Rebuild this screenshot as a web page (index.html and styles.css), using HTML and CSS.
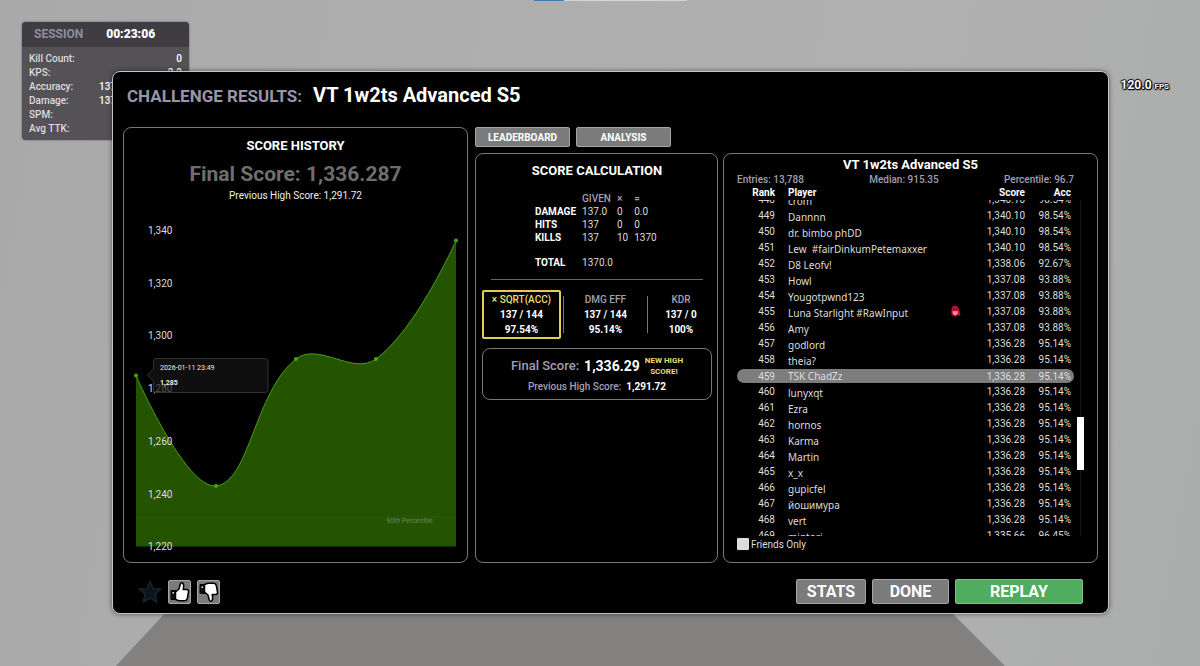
FILE: index.html
```
<!DOCTYPE html>
<html lang="en">
<head>
<meta charset="UTF-8">
<title>Challenge Results</title>
<link rel="stylesheet" href="styles.css">
</head>
<body>
<div class="floor"></div>
<div class="top-bar"></div>
<div class="fps">120.0 <small>FPS</small></div>

<section class="session">
    <header class="session-head"><span>SESSION</span><b>00:23:06</b></header>
    <dl class="session-stats">
        <div><dt>Kill Count:</dt><dd>0</dd></div>
        <div><dt>KPS:</dt><dd>2.2</dd></div>
        <div><dt>Accuracy:</dt><dd class="long">137</dd></div>
        <div><dt>Damage:</dt><dd class="long">137</dd></div>
        <div><dt>SPM:</dt></div>
        <div><dt>Avg TTK:</dt></div>
    </dl>
</section>

<main class="results">
    <h1 class="results-title"><span>CHALLENGE RESULTS:</span> VT 1w2ts Advanced S5</h1>

    <div class="columns">
        <section class="panel history">
            <h2>SCORE HISTORY</h2>
            <p class="history-final">Final Score: 1,336.287</p>
            <p class="history-prev">Previous High Score: 1,291.72</p>
            <svg class="chart" viewBox="124 206 343 350">
                <path class="area" d="M136 375.5C136 375.5 185.5 489 216 486C249.5 482.5 254.3 392 296 359C318.3 341.3 353 376 376 359C417 328.6 456 240.5 456 240.5V546.5H136Z"/>
                <path class="limit" d="M136 517H456"/>
                <path class="line" d="M136 375.5C136 375.5 185.5 489 216 486C249.5 482.5 254.3 392 296 359C318.3 341.3 353 376 376 359C417 328.6 456 240.5 456 240.5"/>
                <g class="dots">
                    <circle cx="136" cy="375.5" r="2"/>
                    <circle cx="216" cy="486" r="2"/>
                    <circle cx="296" cy="359" r="2"/>
                    <circle cx="376" cy="359" r="2"/>
                    <circle cx="456" cy="240.5" r="2"/>
                </g>
                <g class="ticks">
                    <text x="148" y="234">1,340</text>
                    <text x="148" y="287">1,320</text>
                    <text x="148" y="339">1,300</text>
                    <text x="148" y="392">1,280</text>
                    <text x="148" y="445">1,260</text>
                    <text x="148" y="498">1,240</text>
                    <text x="148" y="550">1,220</text>
                </g>
                <text class="limit-label" x="386" y="523">90th Percentile</text>
                <path class="tip" d="M156 358.5H265Q268 358.5 268 361.5V389.5Q268 392.5 265 392.5H156Q153.500 392.5 153.500 389.5V381L147.500 375L153.500 369V361.5Q153.500 358.5 156 358.5Z"/>
                <g class="tip-text">
                    <text x="160" y="370">2026-01-11 23:49</text>
                    <text class="strong" x="160" y="385">1,285</text>
                </g>
            </svg>
        </section>

        <div class="right">
            <nav class="tabs">
                <button type="button" class="btn">LEADERBOARD</button>
                <button type="button" class="btn">ANALYSIS</button>
            </nav>
            <div class="right-panels">
                <section class="panel calc">
                    <h2>SCORE CALCULATION</h2>
                    <table class="calc-table">
                        <thead>
                            <tr><td></td><th>GIVEN</th><th>×</th><th>=</th></tr>
                        </thead>
                        <tbody>
                            <tr><th>DAMAGE</th><td>137.0</td><td>0</td><td>0.0</td></tr>
                            <tr><th>HITS</th><td>137</td><td>0</td><td>0</td></tr>
                            <tr><th>KILLS</th><td>137</td><td>10</td><td>1370</td></tr>
                        </tbody>
                        <tfoot>
                            <tr><th>TOTAL</th><td colspan="3">1370.0</td></tr>
                        </tfoot>
                    </table>
                    <hr>
                    <div class="metrics">
                        <div class="metric active"><span>× SQRT(ACC)</span><b>137 / 144</b><b>97.54%</b></div>
                        <div class="bar"></div>
                        <div class="metric"><span>DMG EFF</span><b>137 / 144</b><b>95.14%</b></div>
                        <div class="bar"></div>
                        <div class="metric last"><span>KDR</span><b>137 / 0</b><b>100%</b></div>
                    </div>
                    <div class="final">
                        <div class="final-row">
                            <span>Final Score:</span><b>1,336.29</b><em>NEW HIGH<br>SCORE!</em>
                        </div>
                        <div class="prev-row"><span>Previous High Score:</span><b>1,291.72</b></div>
                    </div>
                </section>

                <section class="panel board">
                    <h2>VT 1w2ts Advanced S5</h2>
                    <div class="board-meta"><span>Entries: 13,788</span><span>Median: 915.35</span><span>Percentile: 96.7</span></div>
                    <div class="board-body">
                        <table class="board-table">
                            <thead>
                                <tr><th>Rank</th><th class="name">Player</th><th>Score</th><th>Acc</th></tr>
                            </thead>
                            <tbody id="rows"></tbody>
                        </table>
                        <div class="scroll"><div class="thumb"></div></div>
                    </div>
                    <label class="friends"><input type="checkbox">Friends Only</label>
                </section>
            </div>
        </div>
    </div>

    <footer class="actions">
        <button type="button" class="star" aria-label="Favorite">
            <svg viewBox="0 0 22 22"><path d="M11 1.500L13.800 8L20.500 8.500L15.500 13L17 20L11 16.500L5 20L6.500 13L1.500 8.500L8.200 8Z"/></svg>
        </button>
        <button type="button" class="btn vote" aria-label="Like">
            <svg viewBox="1 1 21 22"><path class="cuff" d="M3 10.500H8V19.500H3Z"/><path class="hand" d="M7.500 12L11 9L12.300 4Q13 2.300 14.500 3Q16.200 4 15.500 7.500L15.200 9.500H19Q21 10 20.500 12L19.300 18.500Q18.800 20.500 16.800 20.700H11L7.500 19.500Z"/><path class="button" d="M4.500 12h1.400v1.400H4.500Z"/></svg>
        </button>
        <button type="button" class="btn vote" aria-label="Dislike">
            <svg viewBox="1 1 21 22"><path class="cuff" d="M3 4.500H8V13.500H3Z"/><path class="hand" d="M7.500 4.500L11 3.300H16.800Q18.800 3.500 19.300 5.500L20.500 12Q21 14 19 14.500H15.200L15.500 16.500Q16.200 20 14.500 21Q13 21.700 12.300 20L11 15L7.500 12Z"/><path class="button" d="M4.500 6.500h1.400v1.400H4.500Z"/></svg>
        </button>
        <span class="grow"></span>
        <button type="button" class="btn big stats">STATS</button>
        <button type="button" class="btn big done">DONE</button>
        <button type="button" class="btn big replay">REPLAY</button>
    </footer>
</main>

<script>
const players = [
    [448, 'crom', '1,340.10', '98.54%'],
    [449, 'Dannnn', '1,340.10', '98.54%'],
    [450, 'dr. bimbo phDD', '1,340.10', '98.54%'],
    [451, 'Lew  #fairDinkumPetemaxxer', '1,340.10', '98.54%'],
    [452, 'D8 Leofv!', '1,338.06', '92.67%'],
    [453, 'Howl', '1,337.08', '93.88%'],
    [454, 'Yougotpwnd123', '1,337.08', '93.88%'],
    [455, 'Luna Starlight #RawInput', '1,337.08', '93.88%'],
    [456, 'Amy', '1,337.08', '93.88%'],
    [457, 'godlord', '1,336.28', '95.14%'],
    [458, 'theia?', '1,336.28', '95.14%'],
    [459, 'TSK ChadZz', '1,336.28', '95.14%'],
    [460, 'lunyxqt', '1,336.28', '95.14%'],
    [461, 'Ezra', '1,336.28', '95.14%'],
    [462, 'hornos', '1,336.28', '95.14%'],
    [463, 'Karma', '1,336.28', '95.14%'],
    [464, 'Martin', '1,336.28', '95.14%'],
    [465, 'x_x', '1,336.28', '95.14%'],
    [466, 'gupicfel', '1,336.28', '95.14%'],
    [467, 'йошимура', '1,336.28', '95.14%'],
    [468, 'vert', '1,336.28', '95.14%'],
    [469, 'mintori', '1,335.66', '96.45%']
];
const myRank = 459;
const badgeRank = 455;
const badge = '<svg class="badge" viewBox="0 0 12 12"><path fill="#c8102e" d="M2.500 10.500V4Q3 .8 6 .8T10 4L11.500 10.500H8L6 11.500L4 10.500Z"/><path fill="#ff8fb0" d="M3.500 6.200H9L8.500 8.800L6.200 10.500L4 8.800Z"/><path fill="#5c0614" d="M4 3.500h1.500v1H4ZM7 3.200h1.500v1H7Z"/></svg>';

document.getElementById('rows').innerHTML = players.map(([rank, name, score, acc]) =>
    `<tr${rank === myRank ? ' class="me"' : ''}><td>${rank}</td><td class="name">${name}${rank === badgeRank ? badge : ''}</td><td>${score}</td><td>${acc}</td></tr>`
).join('');
</script>
</body>
</html>
```
FILE: styles.css
```
* {
    box-sizing: border-box;
}
body {
    margin: 0;
    min-height: 100vh;
    padding: 71px 91px 52px 112px;
    position: relative;
    overflow: hidden;
    background: linear-gradient(100deg, #a8a9a8 0%, #aeaeae 35%, #b0b0b0 70%, #abadac 100%);
    font-family: Roboto, "Liberation Sans", sans-serif;
    font-size: 10px;
    color: #fff;
}
h1, h2, p, dl, dd {
    margin: 0;
}
button {
    font-family: inherit;
    padding: 0;
    cursor: pointer;
}

/* game view behind the window */
.floor {
    position: absolute;
    left: 116px;
    right: 195px;
    bottom: 0;
    height: 54px;
    background: #82817f;
    clip-path: polygon(50px 0, calc(100% - 54px) 0, 100% 100%, 0 100%);
}
.top-bar {
    position: absolute;
    top: 0;
    left: 534px;
    width: 153px;
    height: 1px;
    background: linear-gradient(90deg, #3f7fb5 30px, #d5d5d5 30px);
}
.fps {
    position: absolute;
    top: 77px;
    right: 31px;
    font-size: 12px;
    line-height: 16px;
    font-weight: 700;
    text-shadow: 1px 0 1px #000, -1px 0 1px #000, 0 1px 1px #000, 0 -1px 1px #000, 1px 1px 1px #000;
}
.fps small {
    font-size: 8px;
}
.session {
    position: absolute;
    top: 22px;
    left: 22px;
    width: 167px;
    height: 118px;
    border-radius: 4px;
    overflow: hidden;
    background: #545257;
    box-shadow: 0 0 2px rgba(0,0,0,0.5);
}
.session-head {
    display: flex;
    gap: 23px;
    padding-left: 12px;
    height: 25px;
    line-height: 25px;
    font-size: 12px;
    font-weight: 700;
    background: #3f3d41;
}
.session-head span {
    color: #8f8d9e;
}
.session-stats {
    padding: 5px 7px;
    line-height: 14px;
    font-weight: 500;
}
.session-stats div {
    display: flex;
    justify-content: space-between;
}
.session-stats dt {
    color: #dcdcdc;
}
.session-stats .long {
    width: 83px;
}

/* results window */
.results {
    position: relative;
    border: 1px solid #c4c4c4;
    border-radius: 8px;
    padding: 0 10px 9px;
    background: #000;
    box-shadow: 0 0 5px rgba(0,0,0,0.5);
}
.results-title {
    margin-bottom: 8px;
    padding-left: 4px;
    height: 47px;
    line-height: 47px;
    font-size: 20px;
    font-weight: 700;
}
.results-title span {
    margin-right: 6px;
    font-size: 17px;
    color: #9896a8;
}
.columns {
    display: grid;
    grid-template-columns: 345fr 623fr;
    gap: 7px;
}
.panel {
    border: 1px solid #777;
    border-radius: 8px;
}
.panel h2 {
    font-size: 13px;
    line-height: 16px;
    font-weight: 700;
    text-align: center;
}
.history {
    padding-top: 10px;
    text-align: center;
}
.history-final {
    margin-top: 8px;
    font-size: 21px;
    line-height: 24px;
    font-weight: 700;
    color: #6e6e6e;
}
.history-prev {
    margin-top: 3px;
    line-height: 14px;
    color: #eee;
}
.chart {
    display: block;
    width: 100%;
    margin-top: 3px;
}
.area {
    fill: #255400;
}
.line {
    fill: none;
    stroke: #48a010;
}
.dots {
    fill: #43a80c;
}
.limit {
    stroke: #2b5a08;
}
.ticks {
    font-size: 10px;
    fill: #ddd;
}
.limit-label {
    font-size: 7px;
    fill: #6c855a;
}
.tip {
    fill: rgba(22,22,22,0.7);
    stroke: #333;
}
.tip-text {
    font-size: 7px;
    fill: #eee;
}
.tip-text .strong {
    font-weight: 700;
}

.right {
    display: flex;
    flex-direction: column;
    gap: 6px;
}
.tabs {
    display: flex;
    gap: 6px;
}
.btn {
    border: 1px solid #a5a5a5;
    border-radius: 2px;
    background: #7b7b7b;
    color: #fff;
    font-weight: 700;
}
.tabs .btn {
    width: 95px;
    height: 20px;
    font-size: 10px;
}
.right-panels {
    flex: 1;
    display: grid;
    grid-template-columns: 243fr 375fr;
    gap: 5px;
}

.calc {
    padding: 9px 5px 0 6px;
}
.calc-table {
    margin: 13px 0 10px 53px;
    border-collapse: collapse;
    text-align: left;
    line-height: 13px;
}
.calc-table th, .calc-table td {
    padding: 0 6px 0 0;
}
.calc-table td {
    color: #ddd;
}
.calc-table thead th {
    font-weight: 500;
    color: #a19fb2;
}
.calc-table tfoot th, .calc-table tfoot td {
    padding-top: 12px;
}
.calc hr {
    margin: 0 9px;
    border: 0;
    border-top: 1px solid #666;
}
.metrics {
    display: flex;
    align-items: center;
    margin-top: 10px;
}
.metric {
    flex: 80;
    display: flex;
    flex-direction: column;
    border: 2px solid transparent;
    line-height: 15px;
    font-weight: 500;
    text-align: center;
}
.metric.last {
    flex: 62;
}
.metric span {
    color: #a19fb2;
}
.metric b {
    font-weight: 700;
}
.metric.active {
    border: 2px solid #e5cb58;
    border-radius: 2px;
}
.metric.active span {
    color: #f0dc6c;
}
.bar {
    width: 1px;
    height: 37px;
    margin: 0 2px;
    background: #777;
}
.final {
    margin-top: 9px;
    height: 52px;
    border: 1px solid #777;
    border-radius: 8px;
    text-align: center;
    font-weight: 500;
}
.final-row {
    display: flex;
    justify-content: center;
    align-items: center;
    gap: 5px;
    padding-top: 6px;
    font-size: 13px;
    line-height: 22px;
}
.final span {
    color: #a19fb2;
}
.final-row b {
    font-size: 14px;
}
.final-row em {
    font-style: normal;
    font-size: 8px;
    line-height: 11px;
    font-weight: 700;
    color: #f0dc6c;
}
.prev-row {
    display: flex;
    justify-content: center;
    gap: 5px;
    line-height: 20px;
}

.board {
    padding: 3px 13px 12px;
}
.board-meta {
    display: flex;
    justify-content: space-between;
    padding-right: 10px;
    line-height: 14px;
    font-weight: 500;
    color: #a19fb2;
}
.board-body {
    display: flex;
    gap: 3px;
}
.board-table {
    flex: 1;
    display: block;
}
.board-table thead {
    display: block;
    padding-bottom: 1px;
    line-height: 12px;
}
.board-table tbody {
    display: grid;
    align-content: center;
    grid-auto-rows: 16px;
    height: 336px;
    overflow: hidden;
    color: #ddd;
}
.board-table tr {
    display: grid;
    grid-template-columns: 38px 1fr 60px 46px;
    padding-right: 3px;
    text-align: right;
}
.board-table th, .board-table td {
    padding: 0;
}
.board-table td {
    line-height: 15px;
}
.board-table .name {
    display: flex;
    justify-content: space-between;
    padding-left: 13px;
    white-space: pre;
}
.board-table td.name {
    font-family: "Noto Sans", sans-serif;
    font-size: 10px;
    line-height: 18px;
}
.board-table .me {
    height: 14px;
    align-self: center;
    align-items: center;
    border-radius: 7px;
    background: #7d7d7d;
}
.board-table .me td {
    line-height: 13px;
}
.board-table .me td.name {
    line-height: 14px;
}
.badge {
    width: 12px;
    height: 12px;
    margin: 1px 4px 0 0;
}
.scroll {
    width: 7px;
    margin-top: 13px;
    background: linear-gradient(90deg, transparent 3px, #161616 3px, #161616 4px, transparent 4px);
}
.thumb {
    height: 53px;
    margin-top: 217px;
    background: #fff;
}
.friends {
    display: flex;
    align-items: center;
    gap: 2px;
    height: 12px;
    margin-top: 2px;
    color: #ddd;
}
.friends input {
    appearance: none;
    width: 12px;
    height: 12px;
    margin: 0;
    border-radius: 1px;
    background: #ddd;
}

.actions {
    display: flex;
    align-items: center;
    gap: 6px;
    padding: 16px 15px 0;
}
.star {
    width: 24px;
    height: 24px;
    border: 0;
    background: none;
}
.star svg {
    display: block;
    fill: #0b141c;
    stroke: #17242f;
    stroke-width: 1.5;
}
.vote {
    width: 23px;
    height: 24px;
}
.vote svg {
    display: block;
}
.cuff {
    fill: #111;
    stroke: #000;
}
.hand {
    fill: #fff;
    stroke: #000;
    stroke-width: 1.5;
    stroke-linejoin: round;
}
.button {
    fill: #fff;
}
.grow {
    flex: 1;
}
.big {
    height: 25px;
    font-size: 16px;
}
.stats {
    width: 70px;
}
.done {
    width: 77px;
}
.replay {
    width: 128px;
    background: #50ad60;
    border-color: #83bd8c;
}
```
